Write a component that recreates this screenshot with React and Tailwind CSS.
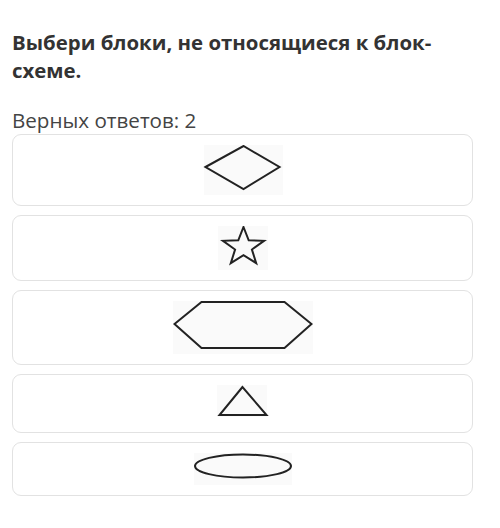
import React from "react";

function starPoints(cx, cy, R, r) {
  const pts = [];
  for (let i = 0; i < 10; i++) {
    const ang = -Math.PI / 2 + (i * Math.PI) / 5;
    const rad = i % 2 === 0 ? R : r;
    pts.push(`${(cx + rad * Math.cos(ang) * 1.08).toFixed(2)},${(cy + rad * Math.sin(ang)).toFixed(2)}`);
  }
  return pts.join(" ");
}

const stroke = { fill: "none", stroke: "#222", strokeWidth: 2, strokeLinejoin: "miter" };

function Card({ h, children }) {
  return (
    <div className="border border-[#e2e2e2] rounded-[9px] bg-white flex justify-center py-[10px]">
      <svg width="140" height={h} viewBox={`0 0 140 ${h}`} className="block">
        {children}
      </svg>
    </div>
  );
}

export default function App() {
  return (
    <div className="w-[500px] h-[528px] bg-white pl-[12px] pr-[27px] pt-[28px]" style={{ fontFamily: '"Open Sans", "Noto Sans", sans-serif' }}>
      <h1 className="text-[20.4px] leading-[28px] font-bold text-[#333] whitespace-nowrap">
        Выбери блоки, не относящиеся к блок-
        <br />
        схеме.
      </h1>
      <p className="mt-[22px] text-[20.6px] leading-[28px] text-[#444]">Верных ответов: 2</p>
      <div className="flex flex-col gap-[9px]">
        <Card h={50}>
          <rect x="31" y="0" width="79" height="50" fill="#fafafa" />
          <polygon points="32.5,22 70.5,1 106.5,22 70.5,44" {...stroke} />
        </Card>
        <Card h={44}>
          <rect x="45" y="0" width="50" height="44" fill="#fafafa" />
          <polygon points={starPoints(70.5, 21, 20, 8.2)} {...stroke} />
        </Card>
        <Card h={53}>
          <rect x="0" y="0" width="140" height="53" fill="#fafafa" />
          <polygon points="1.5,23 28.5,1 111.5,1 138.5,23 111.5,47 28.5,47" {...stroke} />
        </Card>
        <Card h={37}>
          <rect x="44" y="0" width="50" height="32" fill="#fafafa" />
          <polygon points="69.5,2 46.5,30 93.5,30" {...stroke} />
        </Card>
        <Card h={32}>
          <rect x="21" y="0" width="98" height="32" fill="#fafafa" />
          <ellipse cx="70" cy="13" rx="48" ry="11.5" {...stroke} />
        </Card>
      </div>
    </div>
  );
}
